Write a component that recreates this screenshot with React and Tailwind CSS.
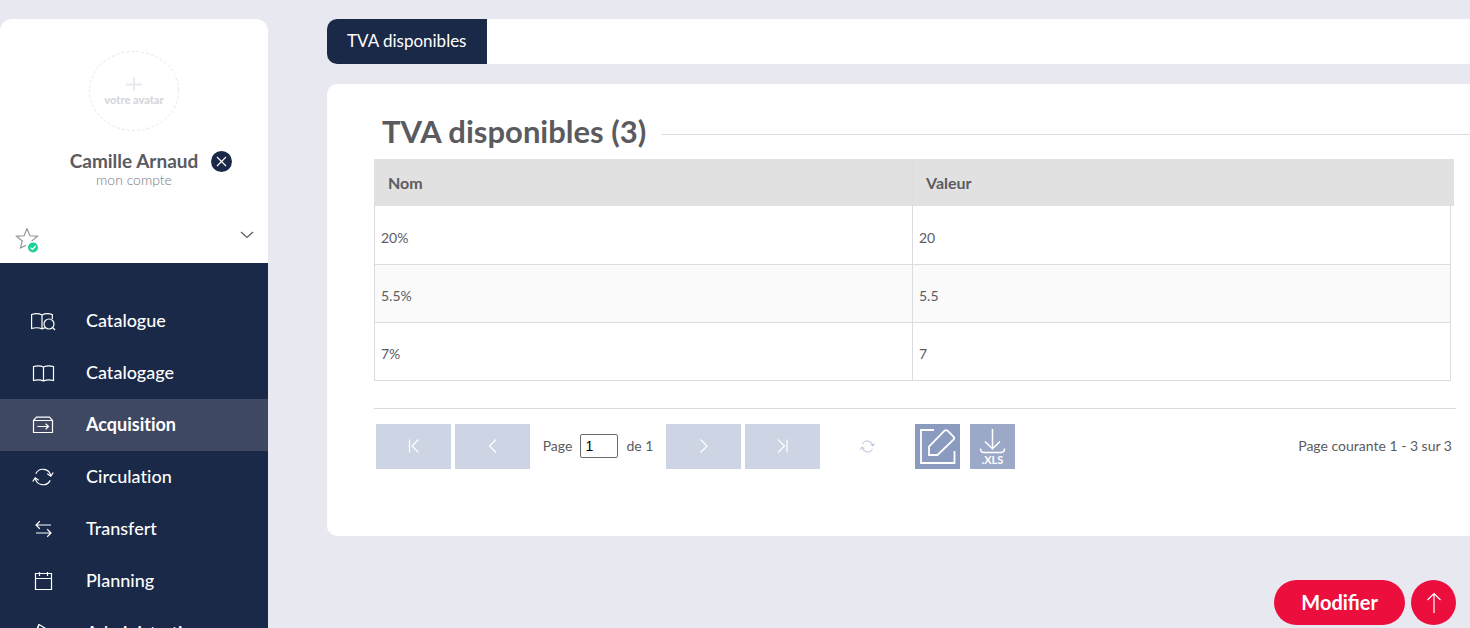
import React from "react";

function Icon({ w, h, children, className = "" }) {
  return (
    <svg
      aria-hidden="true"
      width={w}
      height={h}
      viewBox={`0 0 ${w} ${h}`}
      fill="none"
      stroke="currentColor"
      strokeWidth="1.2"
      className={`shrink-0 ${className}`}
    >
      {children}
    </svg>
  );
}

const CatalogueIcon = () => (
  <Icon w={26} h={20}>
    <path d="M12 17.500V4C9 2.400 5 2.400 1.600 3.500v14c3.400-1 7.400-1 10.400.4 1.500-.8 2.500-1 3.500-1M12 4c3-1.600 7-1.600 10.300-.5v4.500" />
    <circle cx="19" cy="13" r="5" />
    <path d="M22.600 16.500l2.400 2.500" />
  </Icon>
);

const BookIcon = () => (
  <Icon w={24} h={20}>
    <path d="M12.500 18V4C9.500 2.500 6 2.500 2.500 3.500v14c3.400-1 7-1 10 .5 3-1.500 6.600-1.500 10-.5v-14C19 2.500 15.500 2.500 12.500 4" />
  </Icon>
);

const BoxIcon = () => (
  <Icon w={24} h={20}>
    <path d="M2.500 5.500h19v12h-19zM2.500 5.500l3-3.300h13l3 3.300" />
    <path d="M6.500 11.500h11M14.600 8.700l2.900 2.800-2.900 2.800" />
  </Icon>
);

const CycleIcon = ({ w = 24, h = 20 }) => (
  <svg aria-hidden="true" width={w} height={h} viewBox="0 0 24 20" fill="none" stroke="currentColor" strokeWidth="1.200" className="shrink-0">
    <path d="M4.800 6.600A8 8 0 0 1 19.800 9M19.200 13.400A8 8 0 0 1 4.200 11" />
    <path d="M16.300 6.800l3.500 2.400 2.500-3.700M7.700 13.200l-3.500-2.400-2.500 3.700" />
  </svg>
);

const TransferIcon = () => (
  <Icon w={24} h={20}>
    <path d="M20 6H5M8.800 2.300L5 6l3.800 3.700M5 14h15M16.200 10.300L20 14l-3.800 3.700" />
  </Icon>
);

const CalendarIcon = () => (
  <Icon w={24} h={20}>
    <path d="M4.500 2.500h16v16h-16zM4.500 7.500h16M8.500 1v4M16.500 1v4" />
  </Icon>
);

const AdminIcon = () => (
  <Icon w={24} h={20}>
    <path d="M8 1.500l10 6-10 8-5-3z" />
    <path d="M8 1.500l-2 6" />
  </Icon>
);

const menu = [
  { label: "Catalogue", icon: <CatalogueIcon /> },
  { label: "Catalogage", icon: <BookIcon /> },
  { label: "Acquisition", icon: <BoxIcon />, active: true },
  { label: "Circulation", icon: <CycleIcon /> },
  { label: "Transfert", icon: <TransferIcon /> },
  { label: "Planning", icon: <CalendarIcon /> },
  { label: "Administration", icon: <AdminIcon /> },
];

const rates = [
  { name: "20%", value: "20" },
  { name: "5.5%", value: "5.5" },
  { name: "7%", value: "7" },
];

function Sidebar() {
  return (
    <aside className="flex w-[268px] shrink-0 flex-col pt-[19px]">
      <div className="rounded-t-xl bg-white pt-8">
        <button type="button" className="mx-auto block h-20 w-[90px]">
          <svg aria-hidden="true" width="90" height="80" viewBox="0 0 90 80" fill="none" stroke="#e8e8f0">
            <ellipse cx="45" cy="40" rx="44.500" ry="39.500" strokeDasharray="3 2" />
            <path d="M45 26v14M37 33.500h16" strokeWidth="1.800" />
          <text x="45" y="53" textAnchor="middle" stroke="none" fill="#d6d6dd" fontSize="11" fontWeight="900" className="font-['Lato',sans-serif]">
              votre avatar
            </text>
          </svg>
        </button>
        <div className="mt-5 grid grid-cols-[1fr_auto_1fr] items-center gap-x-[13px]">
          <a href="#profil" className="col-start-2 pb-0.5 text-[19px] leading-[19px] font-bold text-[#5b5b5f]">
            Camille Arnaud
          </a>
          <button type="button" aria-label="Se déconnecter" className="flex size-[21px] items-center justify-center rounded-full bg-[#1a2947] text-white">
            <Icon w={11} h={11}>
              <path d="M1 1l9 9M10 1l-9 9" />
            </Icon>
          </button>
        </div>
        <a href="#compte" className="block text-center text-sm leading-4 font-light text-[#77777b]">
          mon compte
        </a>
        <div className="mt-[31px] flex h-11 items-start justify-between pr-[14px] pl-[15px]">
          <button type="button" aria-label="Favoris" className="pt-2">
            <svg aria-hidden="true" width="24" height="26" viewBox="0 0 24 26" fill="none" className="shrink-0">
              <path d="M12 1.500l2.900 7.300 7.600.4-5.900 4.900M12 1.500L9.100 8.800l-7.600.4L7.300 14l-1.800 7 5.500-2.700" stroke="#8f8f94" strokeWidth="1.100" />
              <circle cx="18" cy="20.500" r="5" fill="#1bd19a" />
              <path d="M15.500 20.700l1.900 1.700 3.200-3.300" stroke="#fff" strokeWidth="1.400" />
            </svg>
          </button>
          <button type="button" aria-label="Déplier" className="pt-3 text-[#5b5b5f]">
            <Icon w={14} h={8}>
              <path d="M1 1l6 5.500L13 1" />
            </Icon>
          </button>
        </div>
      </div>
      <nav className="grow bg-[#1a2947] pt-8 [font-variant-ligatures:none]">
        <ul>
          {menu.map((m) => (
            <li key={m.label}>
              <a
                href="#menu"
                aria-current={m.active ? "page" : undefined}
                className={`flex h-[52px] items-center text-lg text-white ${m.active ? "bg-[#3f4863] font-bold" : "font-medium"}`}
              >
                <span className="flex w-[86px] shrink-0 justify-center">{m.icon}</span>
                <span className="pb-0.5">{m.label}</span>
              </a>
            </li>
          ))}
        </ul>
      </nav>
    </aside>
  );
}

function PagerButton({ label, children }) {
  return (
    <button type="button" aria-label={label} className="flex h-[45px] w-[75px] items-center justify-center bg-[#cdd4e4] text-white">
      <Icon w={14} h={16}>{children}</Icon>
    </button>
  );
}

function Pager() {
  return (
    <div className="mt-[27px] mr-[14px] flex items-center border-t border-[#dcdce0] pt-[15px] pr-1 pl-0.5 text-sm text-[#5b5b5f]">
      <div className="flex gap-1">
        <PagerButton label="Première page">
          <path d="M2.500 1.500v13M11.500 1.500L5 8l6.500 6.500" />
        </PagerButton>
        <PagerButton label="Page précédente">
          <path d="M10 1.500L3.500 8l6.500 6.500" />
        </PagerButton>
      </div>
      <div className="flex w-[136px] items-center justify-center">
        <label htmlFor="page">Page</label>
        <input
          id="page"
          type="text"
          defaultValue="1"
          className="mr-2 ml-2 h-6 w-[38px] rounded-xs border border-[#6b6b6b] px-1 font-['Liberation_Sans',sans-serif] text-sm text-black"
        />
        <span>de 1</span>
      </div>
      <div className="flex gap-1">
        <PagerButton label="Page suivante">
          <path d="M3.500 1.500L10 8l-6.500 6.500" />
        </PagerButton>
        <PagerButton label="Dernière page">
          <path d="M2 1.500L8.500 8L2 14.500M11 1.500v13" />
        </PagerButton>
      </div>
      <button type="button" aria-label="Actualiser" className="flex w-[95px] justify-center text-[#a9b5d1]">
        <CycleIcon w={17} h={15} />
      </button>
      <div className="flex gap-2.5">
        <button type="button" aria-label="Éditer" className="size-[45px] bg-[#8b9abf] text-white">
          <svg aria-hidden="true" width="45" height="45" viewBox="0 0 45 45" fill="none" stroke="currentColor" strokeWidth="1.800">
            <path d="M19 6H6v33h33.500V27" />
            <path d="M14 31v-8.500L29.500 6.700q1.500-1.200 3 0l6 6q1.400 1.600 0 3L22.500 31z" />
          </svg>
        </button>
        <button type="button" aria-label="Exporter en XLS" className="size-[45px] bg-[#9ba8c7] text-white">
          <svg aria-hidden="true" width="45" height="45" viewBox="0 0 45 45" fill="none" stroke="currentColor" strokeWidth="1.500">
            <path d="M22.500 5v19M15 17.500l7.500 7.200 7.500-7.200M10.500 24.500q0 4 3.500 4h17q3.500 0 3.500-4" />
            <text x="22.500" y="40" textAnchor="middle" stroke="none" fill="currentColor" fontSize="11" fontWeight="700" className="font-['Lato',sans-serif]">
              .XLS
            </text>
          </svg>
        </button>
      </div>
      <span className="ml-auto">Page courante 1 - 3 sur 3</span>
    </div>
  );
}

export default function App() {
  return (
    <div className="flex h-screen overflow-hidden bg-[#e8e8f1] font-['Lato',sans-serif] text-[#5b5b5f]">
      <Sidebar />
      <main className="ml-[59px] min-w-0 grow pt-[19px]">
        <div role="tablist" className="flex h-[45px] rounded-l-[10px] bg-white">
          <button type="button" role="tab" aria-selected="true" className="rounded-l-[10px] bg-[#1a2947] px-5 pb-0.5 text-[17px] text-white">
            TVA disponibles
          </button>
        </div>

        <section className="mt-5 rounded-l-[10px] bg-white pt-8 pb-[67px] pl-[47px]">
          <div className="flex h-[43px] items-start gap-4 pl-2">
            <h1 className="text-[31px] leading-[30px] font-bold whitespace-nowrap">TVA disponibles (3)</h1>
            <span className="mt-[18px] grow border-t border-[#dcdce0]" />
          </div>
          <div className="pr-[19px]">
            <table className="w-full table-fixed border-collapse text-sm">
              <thead>
                <tr className="h-[47px] bg-[#e1e1e1] text-left text-base shadow-[3px_0_0_#e1e1e1]">
                  <th className="border-l border-[#e1e1e1] pl-[13px] font-bold">Nom</th>
                  <th className="border-l border-[#dedee1] pl-[13px] font-bold">Valeur</th>
                </tr>
              </thead>
              <tbody>
                {rates.map((r) => (
                  <tr key={r.name} className="h-[58px] even:bg-[#fafafa]">
                    <td className="border border-t-0 border-[#dcdce0] px-1.5 pt-1.5">{r.name}</td>
                    <td className="border border-t-0 border-[#dcdce0] px-1.5 pt-1.5">{r.value}</td>
                  </tr>
                ))}
              </tbody>
            </table>
          </div>
          <Pager />
        </section>
      </main>

      <div className="fixed right-[14px] bottom-[3px] flex gap-1.5">
        <button type="button" className="h-[45px] rounded-full bg-[#ec0f3e] px-[27px] pb-0.5 text-xl font-bold text-white">
          Modifier
        </button>
        <button type="button" aria-label="Haut de page" className="flex size-[45px] items-center justify-center rounded-full bg-[#ec0f3e] text-white">
          <Icon w={16} h={22}>
            <path d="M8 21V1.500M1.500 8L8 1.500L14.500 8" />
          </Icon>
        </button>
      </div>
    </div>
  );
}
